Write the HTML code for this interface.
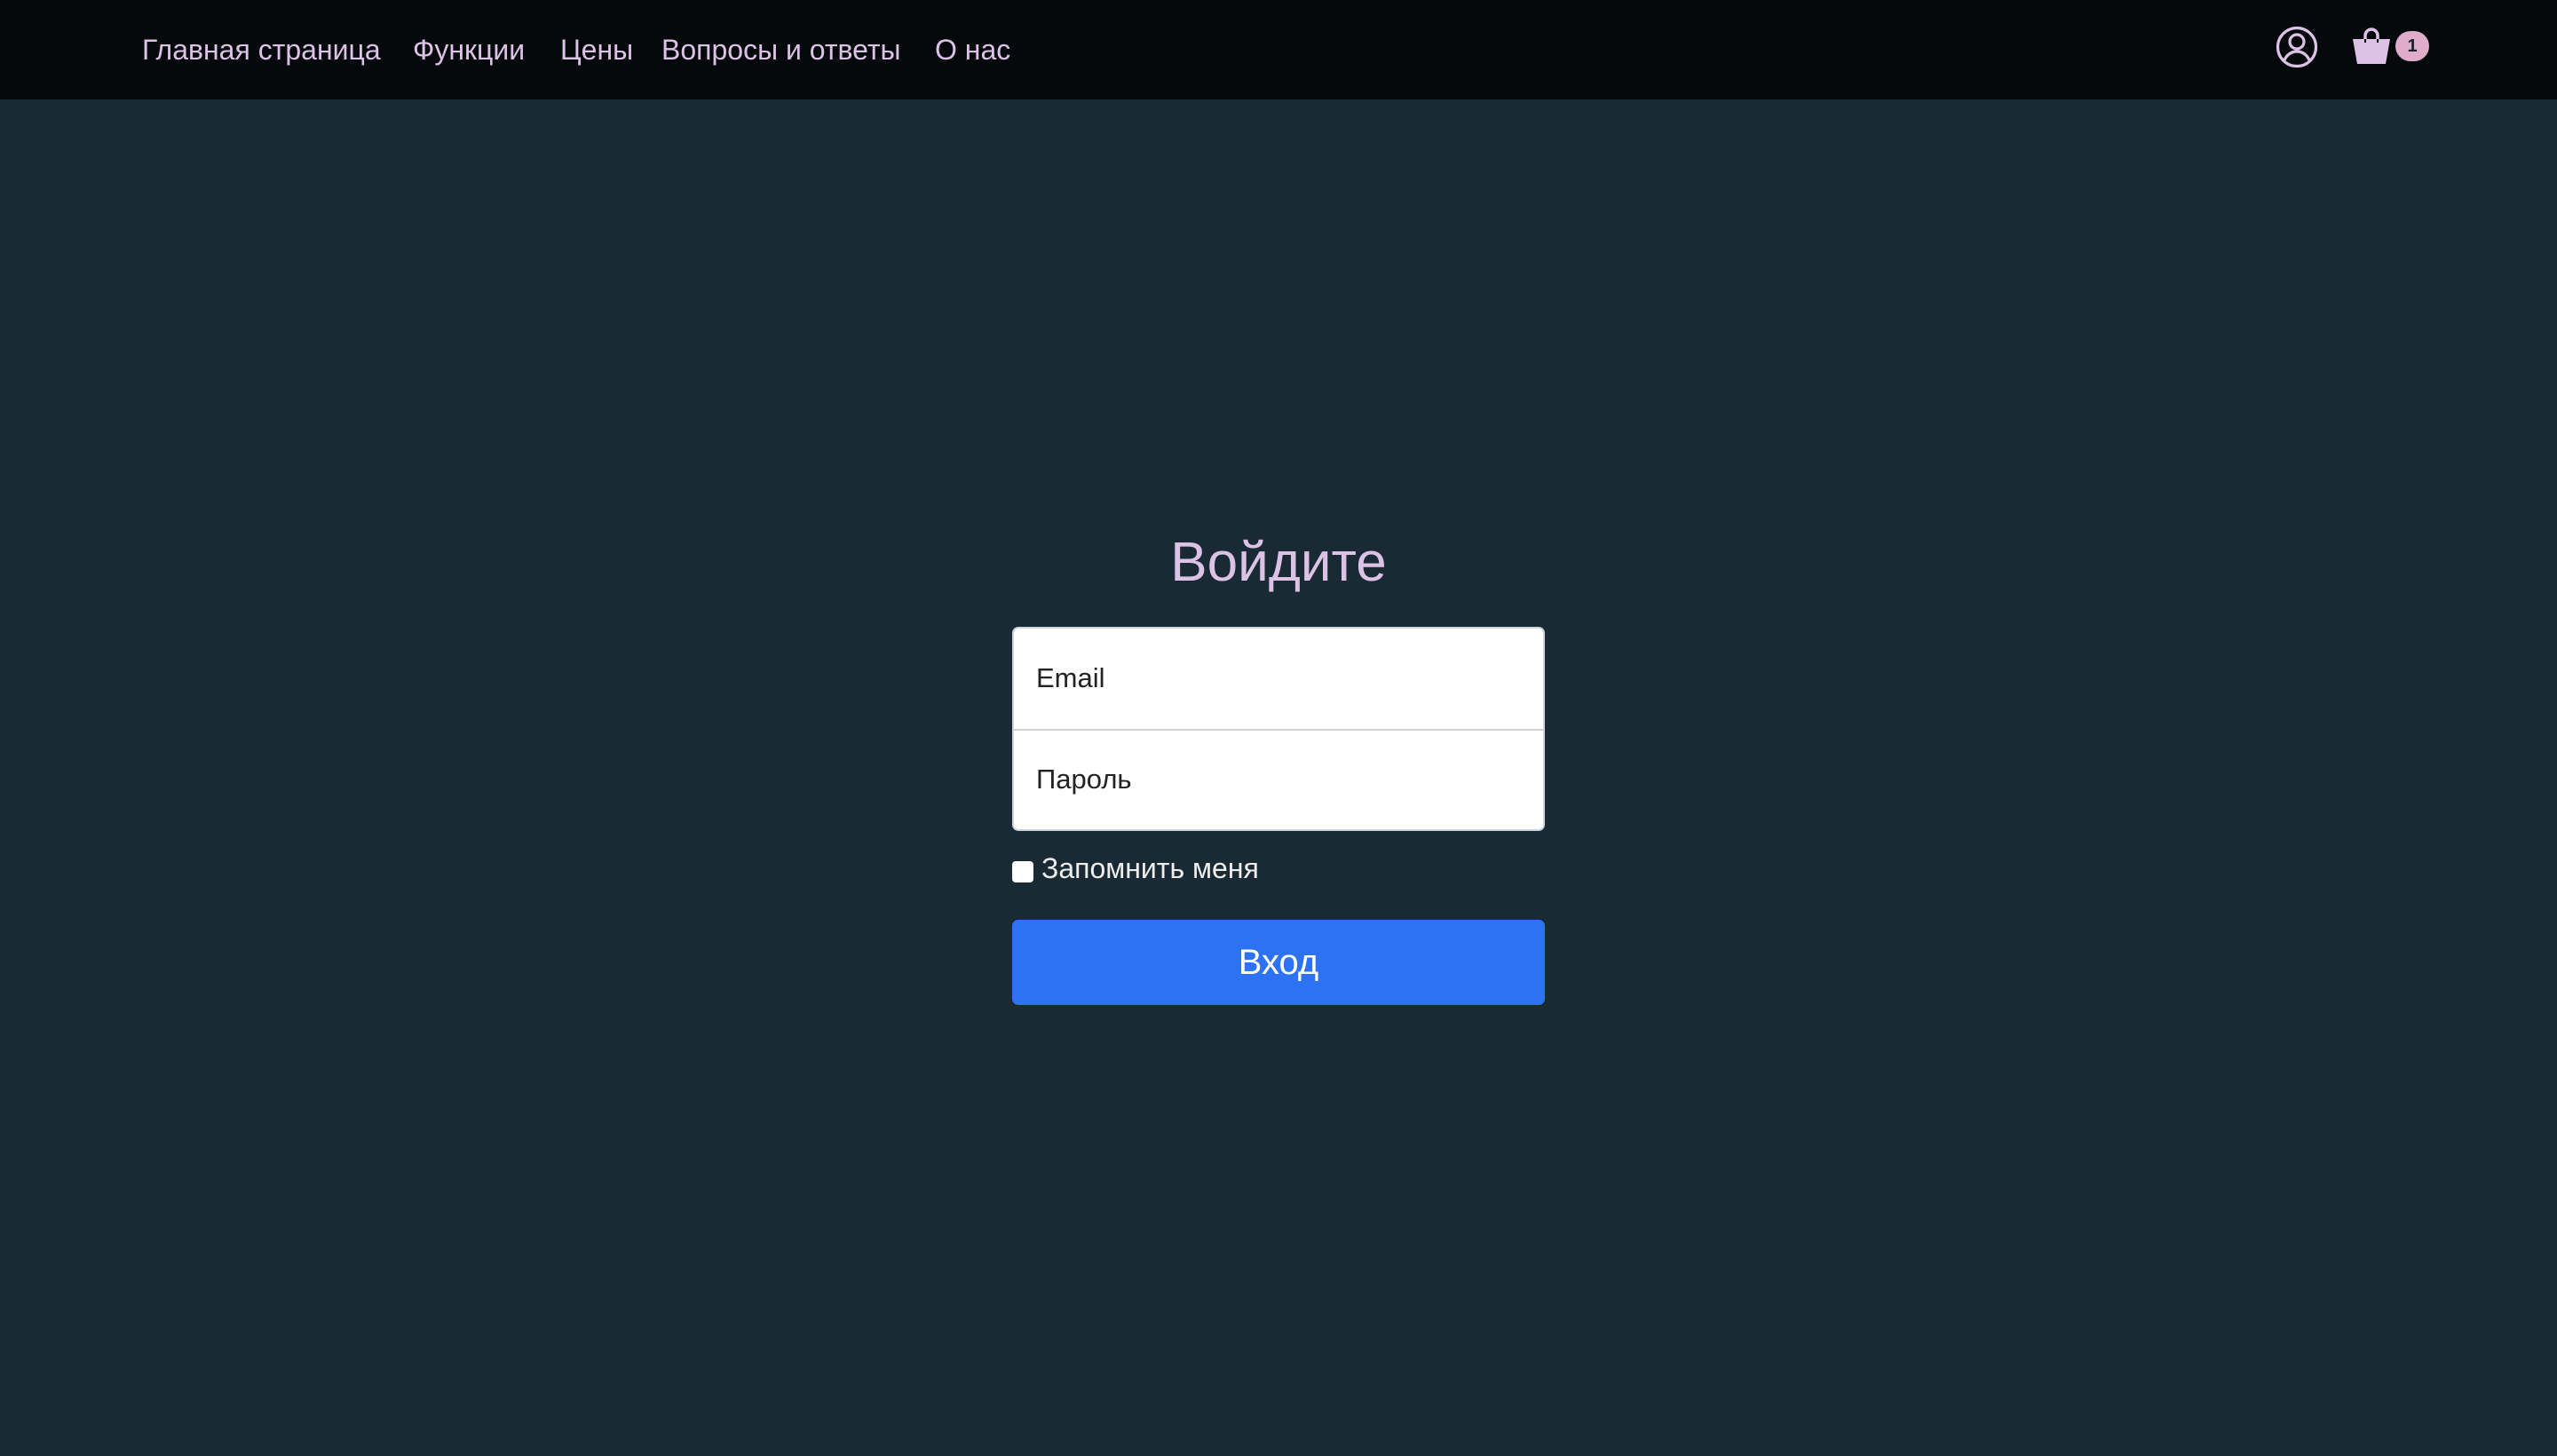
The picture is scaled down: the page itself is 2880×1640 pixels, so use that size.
<!DOCTYPE html>
<html><head><meta charset="utf-8">
<style>
*{margin:0;padding:0;box-sizing:border-box}
html,body{width:2880px;height:1640px;overflow:hidden;background:#192a34;font-family:"Liberation Sans","Noto Sans CJK SC",sans-serif}
nav{position:absolute;left:0;top:0;width:2880px;height:112px;background:#05090c}
nav a{position:absolute;top:36px;font-size:32px;color:#dcc3e6;text-decoration:none;white-space:nowrap;line-height:40px}
h1{position:absolute;left:0;width:2880px;top:596px;text-align:center;font-weight:normal;font-size:62px;color:#dcc3e6;line-height:76px}
.box{position:absolute;left:1140px;top:706px;width:600px;height:230px;background:#fff;border:2px solid #cfd4d9;border-radius:7px}
.div{position:absolute;left:0;right:0;top:113px;height:2px;background:#cfd4d9}
.ph{position:absolute;left:25px;font-size:31px;color:#222}
.cb{position:absolute;left:1140px;top:970px;width:24px;height:24px;background:#fff;border-radius:4px}
.lbl{position:absolute;left:1173px;top:960px;font-size:32px;color:#eee}
.btn{position:absolute;left:1140px;top:1036px;width:600px;height:96px;background:#2c72f2;border-radius:7px;color:#fff;font-size:40px;text-align:center;line-height:96px}
</style></head><body>
<nav>
<a style="left:160px">Главная страница</a>
<a style="left:465px">Функции</a>
<a style="left:631px">Цены</a>
<a style="left:745px">Вопросы и ответы</a>
<a style="left:1053px">О нас</a>
<svg style="position:absolute;left:2562px;top:28px" width="50" height="50" viewBox="0 0 50 50" fill="none" stroke="#dcc3e6" stroke-width="3.2">
<circle cx="25" cy="25" r="21.5"/><circle cx="25" cy="19" r="8"/><path d="M10.5 40.5C14 33 19 30 25 30s11 3 14.5 10.5"/>
</svg>
<svg style="position:absolute;left:2648px;top:30px" width="46" height="44" viewBox="0 0 46 44">
<path d="M16 16V10a7 7 0 0 1 14 0v6" fill="none" stroke="#dcc3e6" stroke-width="3.5"/>
<path d="M2 14h42l-5 28H7z" fill="#dcc3e6"/>
<path d="M16 14v4M30 14v4" stroke="#05090c" stroke-width="2"/>
</svg>
<div style="position:absolute;left:2698px;top:35px;width:38px;height:34px;border-radius:17px;background:#dfadcb;color:#14212b;font-weight:bold;font-size:20px;text-align:center;line-height:34px">1</div>
</nav>
<h1>Войдите</h1>
<div class="box"><div class="ph" style="top:38px">Email</div><div class="div"></div><div class="ph" style="top:152px">Пароль</div></div>
<div class="cb"></div>
<div class="lbl">Запомнить меня</div>
<div class="btn">Вход</div>
</body></html>
